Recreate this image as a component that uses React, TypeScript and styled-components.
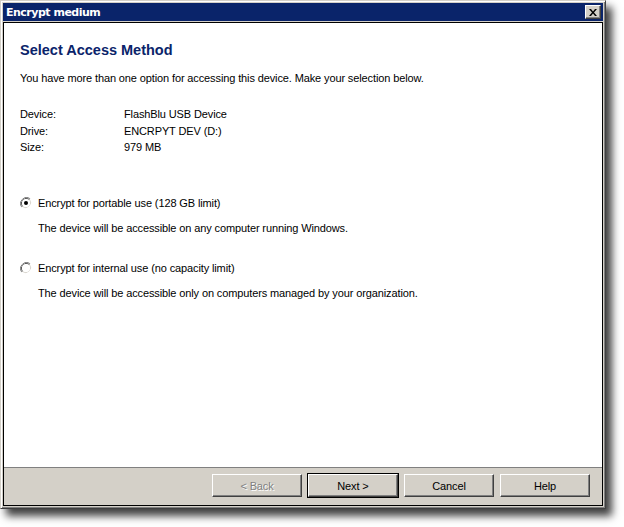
import styled, { createGlobalStyle } from 'styled-components'

const GlobalStyle = createGlobalStyle`
  html, body {
    margin: 0;
    padding: 0;
    background: #ffffff;
  }
  body {
    font-family: 'Liberation Sans', Arial, sans-serif;
    font-size: 11px;
    letter-spacing: -0.12px;
    color: #000;
  }
`

const deviceInfo = [
  { label: 'Device:', value: 'FlashBlu USB Device' },
  { label: 'Drive:', value: 'ENCRPYT DEV (D:)' },
  { label: 'Size:', value: '979 MB' },
]

const options = [
  {
    label: 'Encrypt for portable use (128 GB limit)',
    desc: 'The device will be accessible on any computer running Windows.',
    checked: true,
  },
  {
    label: 'Encrypt for internal use (no capacity limit)',
    desc: 'The device will be accessible only on computers managed by your organization.',
    checked: false,
  },
]

function RadioIcon({ checked }: { checked: boolean }) {
  return (
    <svg width="12" height="12" viewBox="0 0 12 12">
      <path d="M10.2 1.8 A6 6 0 0 0 1.8 10.2" stroke="#808080" strokeWidth="1" fill="none" />
      <path d="M1.8 10.2 A6 6 0 0 0 10.2 1.8" stroke="#ffffff" strokeWidth="1" fill="none" />
      <path d="M9.5 2.5 A5 5 0 0 0 2.5 9.5" stroke="#404040" strokeWidth="1" fill="none" />
      <path d="M2.5 9.5 A5 5 0 0 0 9.5 2.5" stroke="#d4d0c8" strokeWidth="1" fill="none" />
      <circle cx="6" cy="6" r="4" fill="#ffffff" />
      {checked && <circle cx="6" cy="6" r="2" fill="#000000" />}
    </svg>
  )
}

function App() {
  return (
    <>
      <GlobalStyle />
      <Page>
        <Window>
          <TitleBar>
            <TitleText>Encrypt medium</TitleText>
            <CloseButton>
              <svg width="8" height="7" viewBox="0 0 8 7">
                <path d="M0 0h2l2 2.5L6 0h2L5 3.5 8 7H6L4 4.5 2 7H0l3-3.5z" fill="#000" />
              </svg>
            </CloseButton>
          </TitleBar>
          <Body>
            <Content>
              <Heading>Select Access Method</Heading>
              <Intro>
                You have more than one option for accessing this device. Make your selection below.
              </Intro>
              <InfoGrid>
                {deviceInfo.map((row) => (
                  <InfoRow key={row.label}>
                    <span>{row.label}</span>
                    <span>{row.value}</span>
                  </InfoRow>
                ))}
              </InfoGrid>
              <Options>
                {options.map((opt) => (
                  <Option key={opt.label}>
                    <RadioRow>
                      <RadioIcon checked={opt.checked} />
                      <span>{opt.label}</span>
                    </RadioRow>
                    <OptionDesc>{opt.desc}</OptionDesc>
                  </Option>
                ))}
              </Options>
            </Content>
            <ButtonBar>
              <Button disabled>&lt; Back</Button>
              <Button $default>Next &gt;</Button>
              <Button>Cancel</Button>
              <Button>Help</Button>
            </ButtonBar>
          </Body>
        </Window>
      </Page>
    </>
  )
}

const Page = styled.div`
  width: 624px;
  height: 527px;
  box-sizing: border-box;
`

const Window = styled.div`
  width: 606px;
  height: 509px;
  box-sizing: border-box;
  background: #d4d0c8;
  padding: 2px;
  border-top: 1px solid #d4d0c8;
  border-left: 1px solid #d4d0c8;
  border-right: 1px solid #404040;
  border-bottom: 1px solid #404040;
  box-shadow: inset 1px 1px 0 #ffffff, inset -1px -1px 0 #808080, 6px 7px 8px rgba(0, 0, 0, 0.75);
  display: flex;
  flex-direction: column;
`

const TitleBar = styled.div`
  height: 18px;
  background: #0a246a;
  display: flex;
  align-items: center;
  justify-content: space-between;
  padding: 0 2px 0 3px;
  flex-shrink: 0;
`

const TitleText = styled.span`
  color: #ffffff;
  font-family: 'DejaVu Sans', Verdana, sans-serif;
  font-weight: bold;
  font-size: 11px;
  letter-spacing: -0.5px;
`

const CloseButton = styled.div`
  width: 16px;
  height: 14px;
  box-sizing: border-box;
  background: #d4d0c8;
  border-top: 1px solid #ffffff;
  border-left: 1px solid #ffffff;
  border-right: 1px solid #404040;
  border-bottom: 1px solid #404040;
  box-shadow: inset -1px -1px 0 #808080;
  display: flex;
  align-items: center;
  justify-content: center;
`

const Body = styled.div`
  flex: 1;
  margin-top: 1px;
  border: 1px solid #000;
  display: flex;
  flex-direction: column;
  min-height: 0;
`

const Content = styled.div`
  flex: 1;
  background: #ffffff;
  padding: 18px 16px 0;
`

const Heading = styled.div`
  font-family: 'Liberation Sans', Arial, sans-serif;
  font-weight: bold;
  font-size: 14.5px;
  letter-spacing: 0;
  line-height: 18px;
  color: #0a246a;
`

const Intro = styled.div`
  margin-top: 11px;
  line-height: 16px;
`

const InfoGrid = styled.div`
  margin-top: 20px;
  display: flex;
  flex-direction: column;
`

const InfoRow = styled.div`
  display: grid;
  grid-template-columns: 104px 1fr;
  line-height: 16.5px;
`

const Options = styled.div`
  margin-top: 39px;
  display: flex;
  flex-direction: column;
  gap: 24px;
`

const Option = styled.div`
  display: flex;
  flex-direction: column;
`

const RadioRow = styled.div`
  display: flex;
  align-items: center;
  gap: 6px;
  line-height: 16px;
`

const OptionDesc = styled.div`
  margin-top: 9px;
  padding-left: 18px;
  line-height: 16px;
`

const ButtonBar = styled.div`
  height: 38px;
  flex-shrink: 0;
  background: #d4d0c8;
  border-top: 1px solid #808080;
  display: flex;
  justify-content: flex-end;
  align-items: flex-start;
  gap: 6px;
  padding: 6px 12px 0 0;
  box-sizing: border-box;
`

const Button = styled.button<{ $default?: boolean }>`
  width: 90px;
  height: 23px;
  box-sizing: border-box;
  background: #d4d0c8;
  font-family: 'Liberation Sans', Arial, sans-serif;
  font-size: 11px;
  letter-spacing: -0.12px;
  color: #000;
  padding: 0;
  border-top: 1px solid #ffffff;
  border-left: 1px solid #ffffff;
  border-right: 1px solid #404040;
  border-bottom: 1px solid #404040;
  box-shadow: inset -1px -1px 0 #808080;
  ${(p) =>
    p.$default &&
    `
    outline: 1px solid #000;
    outline-offset: 0;
  `}
  &:disabled {
    color: #808080;
    text-shadow: 1px 1px 0 #ffffff;
  }
`

export default App
